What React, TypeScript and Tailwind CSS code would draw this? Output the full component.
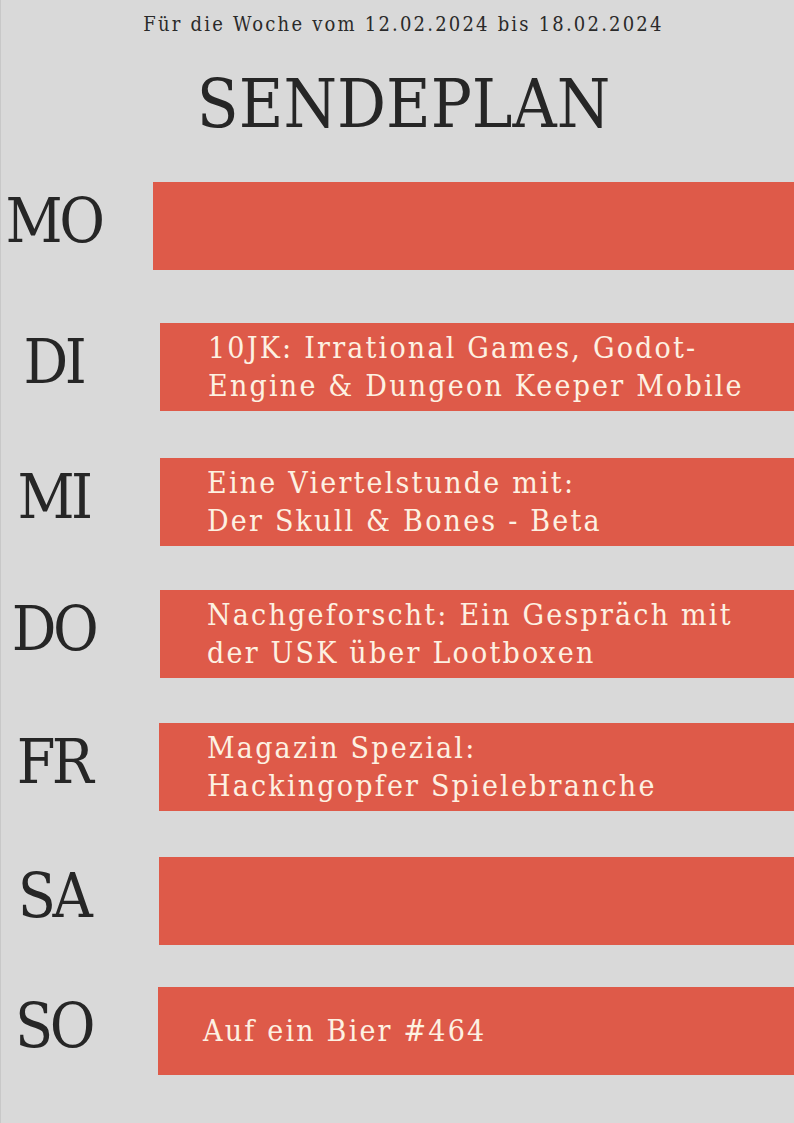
import React from 'react';

interface Slot {
    day: string;
    lines: string[];
    rowClass: string;
    barClass: string;
    textClass: string;
}

const slots: Slot[] = [
    { day: 'MO', lines: [], rowClass: 'mt-[42px]', barClass: 'ml-[0px]', textClass: 'pl-[48px]' },
    {
        day: 'DI',
        lines: ['10JK: Irrational Games, Godot-', 'Engine & Dungeon Keeper Mobile'],
        rowClass: 'mt-[53px]',
        barClass: 'ml-[7px]',
        textClass: 'pl-[48px]',
    },
    {
        day: 'MI',
        lines: ['Eine Viertelstunde mit:', 'Der Skull & Bones - Beta'],
        rowClass: 'mt-[47px]',
        barClass: 'ml-[7px]',
        textClass: 'pl-[47px]',
    },
    {
        day: 'DO',
        lines: ['Nachgeforscht: Ein Gespräch mit', 'der USK über Lootboxen'],
        rowClass: 'mt-[44px]',
        barClass: 'ml-[7px]',
        textClass: 'pl-[47px]',
    },
    {
        day: 'FR',
        lines: ['Magazin Spezial:', 'Hackingopfer Spielebranche'],
        rowClass: 'mt-[45px]',
        barClass: 'ml-[6px]',
        textClass: 'pl-[48px]',
    },
    { day: 'SA', lines: [], rowClass: 'mt-[46px]', barClass: 'ml-[6px]', textClass: 'pl-[48px]' },
    {
        day: 'SO',
        lines: ['Auf ein Bier #464'],
        rowClass: 'mt-[42px]',
        barClass: 'ml-[5px]',
        textClass: 'pl-[45px]',
    },
];

const ScheduleRow = ({ slot }: { slot: Slot }) => (
    <div className={`flex items-center ${slot.rowClass}`}>
        <div className="w-[152px] shrink-0 flex justify-center pr-[47px] pb-[10px]">
            <span className="text-[62px] leading-none tracking-[-3.5px] text-[#262626]">{slot.day}</span>
        </div>
        <div
            className={`flex-1 h-[88px] bg-[#de5a49] flex flex-col justify-center text-[#fdf1e2] text-[30px] leading-[38px] tracking-[2.2px] ${slot.barClass} ${slot.textClass}`}
        >
            {slot.lines.map((line) => (
                <span key={line} className="whitespace-nowrap">
                    {line}
                </span>
            ))}
        </div>
    </div>
);

const App = () => {
    return (
        <div className="w-[794px] h-[1123px] bg-[#d9d9d9] border-l border-[#c8c8c8] overflow-hidden font-['DejaVu_Serif_Condensed','DejaVu_Serif',serif] font-stretch-condensed">
            <div className="pt-[10px] text-center text-[20px] leading-[28px] tracking-[2.2px] text-[#2a2a2a] pl-[12px]">
                Für die Woche vom 12.02.2024 bis 18.02.2024
            </div>
            <h1 className="mt-[30px] text-center text-[68px] leading-[72px] text-[#262626] pl-[12px]">
                SENDEPLAN
            </h1>
            {slots.map((slot) => (
                <ScheduleRow key={slot.day} slot={slot} />
            ))}
        </div>
    );
};

export default App;
